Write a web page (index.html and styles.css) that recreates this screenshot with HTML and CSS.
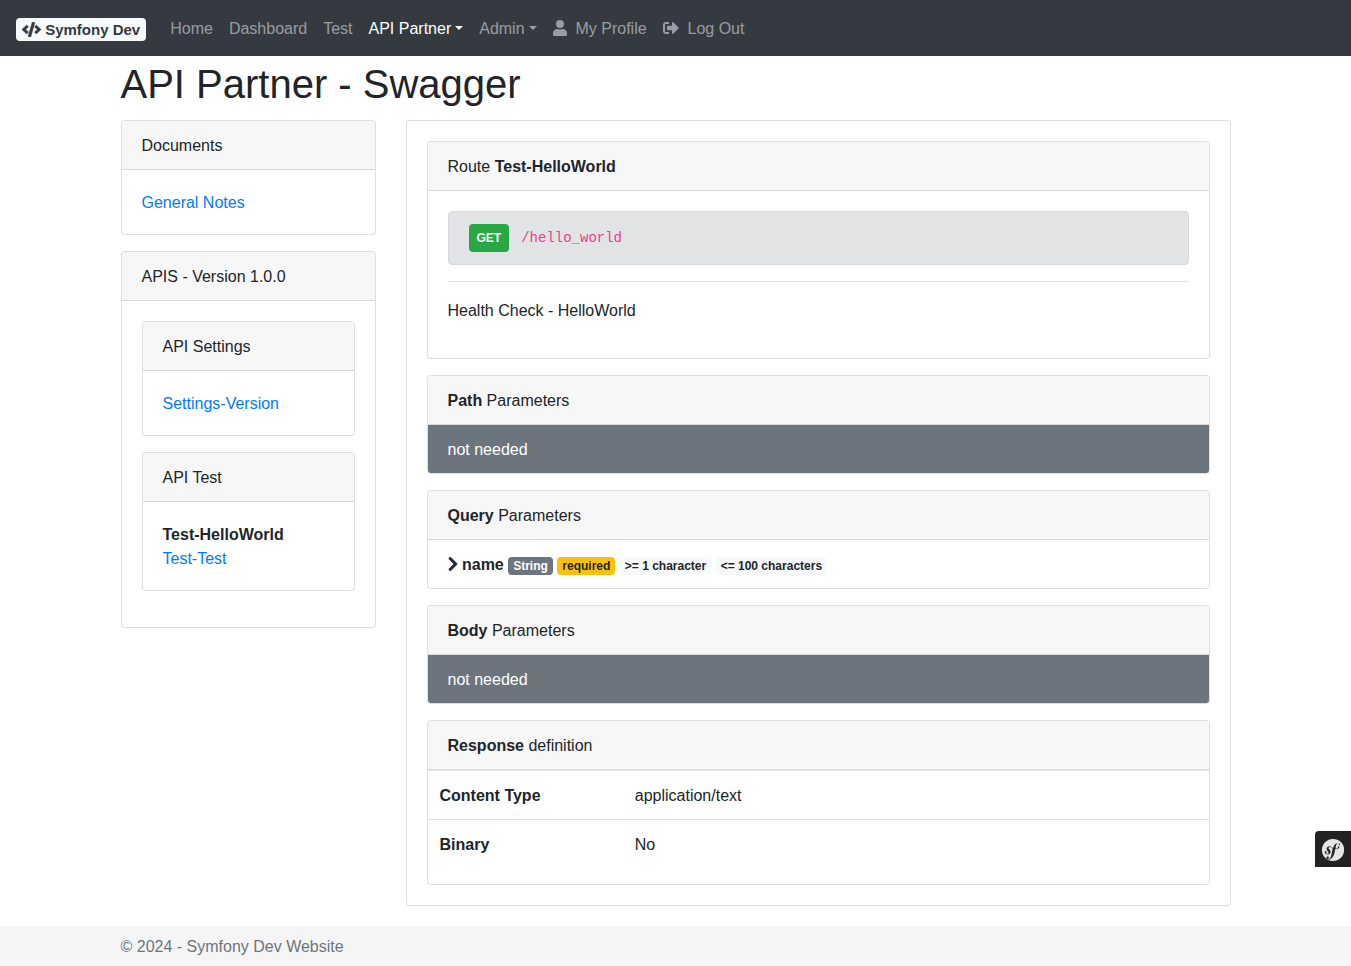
FILE: index.html
```html
<!DOCTYPE html>
<html lang="en">
<head>
<meta charset="utf-8">
<meta name="viewport" content="width=device-width, initial-scale=1">
<title>API Partner - Swagger</title>
<link rel="stylesheet" href="styles.css">
</head>
<body>
<nav class="navbar">
  <a class="brand" href="#"><span class="brand-badge"><svg class="brand-icon" viewBox="0 0 640 512" aria-hidden="true"><path d="M278.900 511.500l-61-17.700c-6.400-1.800-10-8.500-8.200-14.900L346.200 8.700c1.800-6.400 8.500-10 14.900-8.200l61 17.700c6.400 1.800 10 8.500 8.200 14.900L293.800 503.300c-1.900 6.400-8.500 10.100-14.900 8.200zm-114-112.200l43.500-46.400c4.600-4.900 4.300-12.700-.8-17.200L117 256l90.600-79.700c5.100-4.500 5.500-12.300.8-17.200l-43.500-46.400c-4.500-4.800-12.100-5.100-17-.5L3.800 247.200c-5.100 4.700-5.100 12.800 0 17.500l144.100 135.100c4.900 4.600 12.500 4.400 17-.5zm327.200.6l144.100-135.100c5.100-4.700 5.100-12.800 0-17.500L492.100 112.100c-4.800-4.500-12.400-4.300-17 .5L431.600 159c-4.600 4.900-4.300 12.700.8 17.200L523 256l-90.600 79.700c-5.100 4.500-5.500 12.300-.8 17.200l43.500 46.400c4.500 4.900 12.100 5.100 17 .6z"/></svg> Symfony Dev</span></a>
  <ul class="nav">
    <li><a class="nav-link" href="#">Home</a></li>
    <li><a class="nav-link" href="#">Dashboard</a></li>
    <li><a class="nav-link" href="#">Test</a></li>
    <li><a class="nav-link dropdown active" href="#">API Partner</a></li>
    <li><a class="nav-link dropdown" href="#">Admin</a></li>
    <li><a class="nav-link" href="#"><svg class="icon-user" viewBox="0 0 448 512" aria-hidden="true"><path d="M224 256a128 128 0 1 0 0-256 128 128 0 0 0 0 256zm89.600 32h-16.700c-22.200 10.200-46.900 16-72.900 16s-50.600-5.800-72.900-16h-16.700C60.200 288 0 348.200 0 422.400V464c0 26.500 21.500 48 48 48h352c26.500 0 48-21.500 48-48v-41.600c0-74.200-60.200-134.400-134.400-134.400z"/></svg>&nbsp; My Profile</a></li>
    <li><a class="nav-link" href="#"><svg class="icon-out" viewBox="0 0 512 512" aria-hidden="true"><path d="M497 273L329 441c-15 15-41 4.500-41-17v-96H152c-13.300 0-24-10.700-24-24v-96c0-13.300 10.700-24 24-24h136V88c0-21.400 25.900-32 41-17l168 168c9.300 9.400 9.300 24.600 0 34zM192 436v-40c0-6.600-5.400-12-12-12H96c-17.700 0-32-14.300-32-32V160c0-17.700 14.300-32 32-32h84c6.600 0 12-5.400 12-12V76c0-6.600-5.400-12-12-12H96c-53 0-96 43-96 96v192c0 53 43 96 96 96h84c6.600 0 12-5.400 12-12z"/></svg>&nbsp; Log Out</a></li>
  </ul>
</nav>

<main class="container">
  <h1>API Partner - Swagger</h1>
  <div class="columns">
    <aside class="stack">
      <section class="card">
        <div class="card-header">Documents</div>
        <div class="card-body"><a href="#">General Notes</a></div>
      </section>
      <section class="card">
        <div class="card-header">APIS - Version 1.0.0</div>
        <div class="card-body stack menu">
          <section class="card">
            <div class="card-header">API Settings</div>
            <div class="card-body"><a href="#">Settings-Version</a></div>
          </section>
          <section class="card">
            <div class="card-header">API Test</div>
            <div class="card-body"><strong>Test-HelloWorld</strong><br><a href="#">Test-Test</a></div>
          </section>
        </div>
      </section>
    </aside>

    <div class="card">
      <div class="card-body outer stack">
        <section class="card">
          <div class="card-header">Route <strong>Test-HelloWorld</strong></div>
          <div class="card-body outer">
            <div class="route"><span class="badge method">GET</span><code>/hello_world</code></div>
            <hr>
            <p>Health Check - HelloWorld</p>
          </div>
        </section>
        <section class="card">
          <div class="card-header"><strong>Path</strong> Parameters</div>
          <div class="item muted">not needed</div>
        </section>
        <section class="card">
          <div class="card-header"><strong>Query</strong> Parameters</div>
          <div class="item"><svg class="icon-chevron" viewBox="0 0 320 512" aria-hidden="true"><path d="M285.500 273L91.100 467.300c-9.400 9.400-24.600 9.400-33.900 0l-22.700-22.700c-9.400-9.400-9.400-24.500 0-33.900L188.500 256 34.500 101.300c-9.300-9.400-9.300-24.500 0-33.900l22.700-22.700c9.400-9.400 24.600-9.400 33.900 0L285.500 239c9.400 9.400 9.400 24.600 0 34z"/></svg> <strong>name</strong> <span class="badge type">String</span> <span class="badge required">required</span> <span class="badge light">&gt;= 1 character</span> <span class="badge light">&lt;= 100 characters</span></div>
        </section>
        <section class="card">
          <div class="card-header"><strong>Body</strong> Parameters</div>
          <div class="item muted">not needed</div>
        </section>
        <section class="card">
          <div class="card-header"><strong>Response</strong> definition</div>
          <table class="definition">
            <tbody>
              <tr><th scope="row">Content Type</th><td>application/text</td></tr>
              <tr><th scope="row">Binary</th><td>No</td></tr>
            </tbody>
          </table>
        </section>
      </div>
    </div>
  </div>
</main>

<footer class="footer"><div class="container">© 2024 - Symfony Dev Website</div></footer>

<button class="toolbar-toggle" type="button" aria-label="Show Symfony toolbar">
  <svg viewBox="0 0 24 24" aria-hidden="true"><path d="M12 .9C5.800.9.9 5.800.9 12a11.100 11.100 0 1 0 22.200 0A11 11 0 0 0 12 .9zm6.500 6c-.6 0-.9-.3-.9-.8 0-.2 0-.4.2-.6l.2-.4c0-.3-.3-.4-.5-.4-2 .1-2.500 2.700-2.900 4.800l-.2 1.100c1.100.2 1.900 0 2.400-.3.6-.4-.2-.8-.1-1.300.1-.5.5-.7.8-.7.5 0 .8.5.8 1 0 .8-1.100 2-3.300 1.900l-.8-.1-.4 2.300c-.4 1.700-.8 4-2.500 6-1.500 1.700-3 2-3.700 2-1.300 0-2.100-.6-2.200-1.600 0-.9.8-1.400 1.300-1.400.7 0 1.200.5 1.200 1.100s-.3.8-.5.9c-.1.1-.3.2-.3.4 0 .1.1.3.4.3.5 0 .9-.3 1.100-.5 1.200-1 1.700-2.700 2.300-5.800l.1-.8.7-3.200c-.8-.6-1.300-1.400-2.400-1.700-.6-.2-1.100 0-1.500.4-.4.5-.2 1.200.2 1.600l.6.700c.8.9 1.200 1.600 1 2.500-.2 1.500-2 2.600-4 1.900-1.800-.6-2-1.800-1.800-2.500.2-.6.6-.7 1.100-.6.5.2.6.7.6 1.200l-.1.3c-.2.1-.3.3-.3.4-.1.4.4.6.7.7.7.3 1.600-.2 1.800-.8.2-.6-.2-1.100-.4-1.200l-.7-.8c-.4-.4-1.100-1.400-.7-2.600.1-.5.4-.9.7-1.300a4 4 0 0 1 2.800-.6c1.200.4 1.800 1.100 2.600 1.800.5-1.200 1-2.400 1.800-3.500.9-.9 1.900-1.600 3.100-1.700 1.300.2 2.200.7 2.200 1.600 0 .4-.2 1.100-.9 1.100z"/></svg>
</button>
</body>
</html>
```

FILE: styles.css
```css
*, *::before, *::after { box-sizing: border-box; }

body {
  display: flex;
  flex-direction: column;
  min-height: 100vh;
  margin: 0;
  background: #fff;
  color: #212529;
  font: 16px/24px "Liberation Sans", Arial, sans-serif;
}

a { color: #007bff; text-decoration: none; }
a:hover { text-decoration: underline; }

svg { fill: currentColor; }

.navbar {
  display: flex;
  align-items: center;
  gap: 16px;
  min-height: 56px;
  padding: 8px 16px;
  background: #343a40;
}

.brand { padding: 5px 0; font-size: 20px; line-height: 30px; }

.brand-badge {
  display: inline-block;
  padding: 4px 6px;
  border-radius: 4px;
  background: #f8f9fa;
  color: #343a40;
  font-size: 15px;
  font-weight: 700;
  line-height: 15px;
  white-space: nowrap;
}

.brand-icon {
  width: 19px;
  height: 15px;
  stroke: currentColor;
  stroke-width: 20;
  vertical-align: -2px;
}

.nav {
  display: flex;
  flex-wrap: wrap;
  margin: 0;
  padding: 0;
  list-style: none;
}

.nav-link { display: block; padding: 9px 8px 7px; color: rgba(255, 255, 255, 0.5); }
.nav-link.active { color: #fff; }

.dropdown::after {
  content: "";
  display: inline-block;
  margin-left: 4px;
  border: 4px solid transparent;
  border-top-color: currentColor;
  border-bottom: 0;
  vertical-align: 4px;
}

.icon-user, .icon-out { height: 16px; vertical-align: -2px; }
.icon-user { width: 14px; }
.icon-out { width: 16px; }

.container { width: 100%; max-width: 1140px; margin: 0 auto; padding: 0 15px; }

h1 { margin: 4px 0 12px; font-size: 40px; font-weight: 400; line-height: 48px; }

.columns {
  display: grid;
  grid-template-columns: minmax(0, 255fr) minmax(0, 825fr);
  align-items: start;
  gap: 30px;
  margin-bottom: 20px;
}

.stack { display: flex; flex-direction: column; gap: 16px; }

.card {
  overflow: hidden;
  border: 1px solid rgba(0, 0, 0, 0.125);
  border-radius: 4px;
  background: #fff;
}

.card-header {
  padding: 13px 20px 11px;
  border-bottom: 1px solid rgba(0, 0, 0, 0.125);
  background: #f7f7f7;
}

.card-body { padding: 21px 20px 19px; }
.card-body.outer { padding: 20px; }
.card-body.menu { padding: 20px 20px 36px; }

.route {
  display: flex;
  align-items: center;
  gap: 12px;
  padding: 12px 20px;
  border: 1px solid #d6d8db;
  border-radius: 4px;
  background: #e2e3e5;
}

code { color: #e83e8c; font-family: "Liberation Mono", monospace; font-size: 14px; }

hr { margin: 16px 0; border: 0; border-top: 1px solid rgba(0, 0, 0, 0.1); }
p { margin: 0; padding: 1px 0 15px; }

.badge {
  display: inline-block;
  padding: 3px 5px;
  border-radius: 4px;
  font-size: 12px;
  font-weight: 700;
  line-height: 12px;
  white-space: nowrap;
}

.method { padding: 8px; background: #28a745; color: #fff; }
.type { background: #6c757d; color: #fff; }
.required { background: #ffc107; }
.light { background: #f8f9fa; }

.item { padding: 13px 20px 11px; }
.muted { background: #6c757d; color: #fff; }
.icon-chevron {
  width: 10px;
  height: 16px;
  stroke: currentColor;
  stroke-width: 20;
  vertical-align: -2px;
}

.definition { width: 100%; margin-bottom: 16px; border-spacing: 0; table-layout: fixed; }
.definition th, .definition td {
  padding: 13px 12px 11px;
  border-top: 1px solid #dee2e6;
  text-align: left;
}
.definition th { width: 25%; }

.footer { background: #f5f5f5; color: #6c757d; margin-top: auto; padding: 9px 0 7px; }

.toolbar-toggle {
  position: fixed;
  right: 0;
  bottom: 99px;
  display: flex;
  align-items: center;
  justify-content: center;
  width: 36px;
  height: 36px;
  padding: 2px 0 0;
  border: 0;
  border-top-left-radius: 4px;
  background: #222;
  color: #e5e5e5;
}

.toolbar-toggle svg { width: 24px; height: 24px; }
```
